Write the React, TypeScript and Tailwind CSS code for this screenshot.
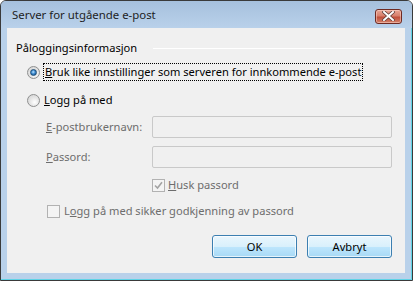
import React from 'react';

function Radio({ checked }: { checked?: boolean }) {
    return (
        <div className="w-[13px] h-[13px] rounded-full border border-[#8e8f8f] bg-[radial-gradient(circle_at_60%_65%,#ffffff_0%,#e6e6e6_45%,#cfcfcf_100%)] flex items-center justify-center shrink-0">
            {checked && (
                <div className="w-[7px] h-[7px] rounded-full border border-[#1f4f77] bg-[radial-gradient(circle_at_45%_40%,#bfe6ff_0%,#3c8ad0_45%,#0d3f73_100%)]" />
            )}
        </div>
    );
}

function Check({ checked }: { checked?: boolean }) {
    return (
        <div className="w-[13px] h-[13px] border border-[#b2b2b2] bg-[#f4f4f4] flex items-center justify-center shrink-0">
            {checked && (
                <svg width="9" height="9" viewBox="0 0 9 9">
                    <path d="M1 4.5 L3.5 7 L8 1.2" fill="none" stroke="#a3a3a3" strokeWidth="1.6" />
                </svg>
            )}
        </div>
    );
}

function Field() {
    return <div className="w-[240px] h-[22px] shrink-0 border border-[#c9c9c9] rounded-[2px] bg-[#f0f0f0]" />;
}

function Btn({ children }: { children: React.ReactNode }) {
    return (
        <button className="w-[85px] h-[23px] rounded-[3px] border border-[#3c7fb1] bg-[linear-gradient(to_bottom,#eaf6fd_0%,#d9f0fc_50%,#bee6fd_51%,#a7d9f5_100%)] shadow-[inset_0_0_0_1px_rgba(255,255,255,0.7)] text-[11.1px] text-black leading-none">
            {children}
        </button>
    );
}

export default function App() {
    return (
        <div
            className="w-[413px] h-[281px] border border-[#3a3a3a] rounded-t-[6px] bg-[#b9d1ea] flex flex-col text-[11.1px] text-black"
            style={{ fontFamily: '"Noto Sans", "Open Sans", sans-serif' }}
        >
            <div className="h-[27px] shrink-0 flex items-center justify-between pl-[11px] pr-[10px] rounded-t-[5px] bg-[linear-gradient(to_bottom,#a6c0dd,#b9d1ea)]">
                <span className="text-[#1e1e1e] text-[11.4px] pt-[1px]">Server for utgående e-post</span>
                <div className="w-[27px] h-[15px] mt-[3px] rounded-[3px] border border-[#6e2a22] bg-[linear-gradient(to_bottom,#e8a493_0%,#d7806d_45%,#c14f3a_55%,#d2826b_100%)] shadow-[inset_0_0_0_1px_rgba(255,220,210,0.5)] flex items-center justify-center">
                    <svg width="13" height="10" viewBox="0 0 13 10">
                        <path d="M2 1 L11 9 M11 1 L2 9" stroke="#5a3a36" strokeWidth="3.4" strokeLinecap="square" />
                        <path d="M2 1 L11 9 M11 1 L2 9" stroke="#ffffff" strokeWidth="2" strokeLinecap="square" />
                    </svg>
                </div>
            </div>
            <div className="flex-1 flex border-r border-b border-r-[#5fd3e6] border-b-[#5fd3e6]">
                <div className="flex-1 ml-[6px] mr-[6px] mb-[6px] bg-[#f0f0f0] flex flex-col">
                    <div className="mt-[12px] h-[16px] flex items-center pl-[9px] pr-[15px]">
                        <span>Påloggingsinformasjon</span>
                        <div className="flex-1 ml-[16px] h-px bg-[#b4b4b4] border-b border-b-white" />
                    </div>
                    <div className="mt-[7px] h-[18px] flex items-center pl-[20px]">
                        <Radio checked />
                        <span className="ml-[3px] px-[1px] border border-dotted border-black leading-[16px]">
                            <u>B</u>ruk like innstillinger som serveren for innkommende e-post
                        </span>
                    </div>
                    <div className="mt-[10px] h-[18px] flex items-center pl-[20px]">
                        <Radio />
                        <span className="ml-[4px]">
                            <u>L</u>ogg på med
                        </span>
                    </div>
                    <div className="mt-[7px] flex items-center pl-[39px] text-[#6d6d6d]">
                        <span className="w-[106px] shrink-0">
                            <u>E</u>-postbrukernavn:
                        </span>
                        <Field />
                    </div>
                    <div className="mt-[8px] flex items-center pl-[39px] text-[#6d6d6d]">
                        <span className="w-[106px] shrink-0">
                            <u>P</u>assord:
                        </span>
                        <Field />
                    </div>
                    <div className="mt-[9px] h-[16px] flex items-center pl-[145px] text-[#6d6d6d]">
                        <Check checked />
                        <span className="ml-[3px]">
                            <u>H</u>usk passord
                        </span>
                    </div>
                    <div className="mt-[10px] h-[16px] flex items-center pl-[40px] text-[#6d6d6d]">
                        <Check />
                        <span className="ml-[4px]">
                            L<u>o</u>gg på med sikker godkjenning av passord
                        </span>
                    </div>
                    <div className="mt-[16px] flex justify-end gap-[10px] pr-[13px]">
                        <Btn>OK</Btn>
                        <Btn>Avbryt</Btn>
                    </div>
                </div>
            </div>
        </div>
    );
}
